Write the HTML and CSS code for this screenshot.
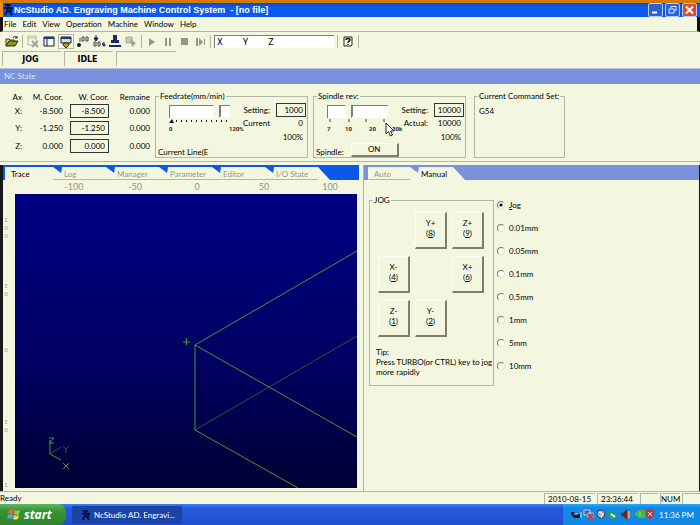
FILE: index.html
```html
<!DOCTYPE html>
<html lang="en">
<head>
<meta charset="utf-8">
<title>NcStudio AD. Engraving Machine Control System</title>
<link rel="stylesheet" href="styles.css">
</head>
<body>
<header class="titlebar">
  <svg class="app-icon" width="11" height="12" viewBox="0 0 11 12"><path d="M2 1h6M5 0v4M1 4h9M5 5L2 11M5 6l4 5M8 5v3" stroke="#061038" stroke-width="2" fill="none"/></svg>
  <h1>NcStudio AD. Engraving Machine Control System &nbsp;- [no file]</h1>
  <div class="window-buttons">
    <button aria-label="Minimize"><svg width="13" height="12" viewBox="0 0 13 12"><path d="M3 8.500h5" stroke="#fff" stroke-width="2"/></svg></button>
    <button aria-label="Restore"><svg width="13" height="12" viewBox="0 0 13 12"><path d="M5 4V2.500h5v4H8.500M3 5h5v4H3z" stroke="#dfe8ff" fill="none"/></svg></button>
    <button class="close" aria-label="Close"><svg width="13" height="12" viewBox="0 0 13 12"><path d="M3 2.500l7 7M10 2.500l-7 7" stroke="#fff" stroke-width="2"/></svg></button>
  </div>
</header>
<nav class="menubar">
  <a href="#">File</a><a href="#">Edit</a><a href="#">View</a><a href="#">Operation</a><a href="#">Machine</a><a href="#">Window</a><a href="#">Help</a>
</nav>
<div class="toolbar">
  <button aria-label="Open"><svg width="14" height="13" viewBox="0 0 14 13"><path d="M1 11V4h3l1 1h4v2" fill="#d8d060" stroke="#38400c"/><path d="M1 11l3-5h9l-3 5z" fill="#8c9418" stroke="#28300a"/><path d="M8 3c1-2 3-2 4 0M12 1v2h-2" stroke="#223" fill="none"/></svg></button>
  <span class="sep"></span>
  <button aria-label="Unload"><svg width="14" height="13" viewBox="0 0 14 13"><path d="M2 1h8v9H2zM2 3h8" fill="none" stroke="#b9bba9"/><path d="M6 6l6 6M12 6l-6 6" stroke="#a3a596" stroke-width="2"/></svg></button>
  <button aria-label="Window"><svg width="14" height="13" viewBox="0 0 14 13"><path d="M2 2h10v9H2z" fill="#fff" stroke="#10183c"/><path d="M2 3h10" stroke="#163a9c" stroke-width="2"/><path d="M5 3v8" stroke="#10183c"/></svg></button>
  <button class="pressed" aria-label="Trace view"><svg width="14" height="13" viewBox="0 0 14 13"><path d="M2 2h10v6H2z" fill="#e8e0a0" stroke="#10183c"/><path d="M2 3h10" stroke="#163a9c" stroke-width="2"/><path d="M5 8h5v2l-3 3-3-3z" fill="#ad9f18" stroke="#282c10"/></svg></button>
  <button aria-label="Set origin"><svg width="14" height="13" viewBox="0 0 14 13"><circle cx="3" cy="10" r="2" fill="#10183c"/><path d="M4 3v4M6 2h2v4H6zM10 2h2v4h-2z" stroke="#444" fill="none"/></svg></button>
  <button aria-label="Return to origin"><svg width="14" height="13" viewBox="0 0 14 13"><path d="M4 0v4M2 3h4L4 6z" stroke="#10183c" fill="#10183c"/><path d="M2 7h2v4H2zM6 7h2v4H6zM10 9l2-2v4z" stroke="#444" fill="none"/><circle cx="12" cy="10" r="1.500" fill="#163a9c"/></svg></button>
  <button aria-label="Tool"><svg width="14" height="13" viewBox="0 0 14 13"><path d="M5 0h4v5h2v3H3V5h2z" fill="#182868"/><path d="M1 10h12v2H1z" fill="#182868"/></svg></button>
  <button aria-label="Breakpoint"><svg width="14" height="13" viewBox="0 0 14 13"><path d="M2 2h6v6H2z" fill="#c9ccb9" stroke="#a6a997"/><path d="M6 4l6 4-4 4z" fill="#9fa28f"/></svg></button>
  <span class="sep"></span>
  <button aria-label="Start"><svg width="14" height="13" viewBox="0 0 14 13"><path d="M4 3v8l6-4z" fill="#92958a"/></svg></button>
  <button aria-label="Pause"><svg width="14" height="13" viewBox="0 0 14 13"><path d="M4 3h2v8H4zM8 3h2v8H8z" fill="#92958a"/></svg></button>
  <button aria-label="Stop"><svg width="14" height="13" viewBox="0 0 14 13"><path d="M4 3h7v7H4z" fill="#92958a"/></svg></button>
  <button aria-label="Resume"><svg width="14" height="13" viewBox="0 0 14 13"><path d="M3 3h2v8H3zM6 3v8l4-4zM11 4h1v6h-1z" fill="#92958a"/></svg></button>
  <span class="sep"></span>
  <input class="mdi" aria-label="Coordinates" value="X         Y         Z">
  <span class="sep"></span>
  <button aria-label="Help"><svg width="14" height="13" viewBox="0 0 14 13"><path d="M3 2h8v8l-1 1H3z" fill="#fbfbe6" stroke="#222" stroke-width="1"/><path d="M5 5c0-2 4-2 4 0 0 1-2 1-2 3M7 9v1" fill="none" stroke="#111" stroke-width="1.500"/></svg></button>
  <span class="sep"></span>
</div>
<div class="mode-row">
  <div class="mode mode-wide">JOG</div><div class="mode">IDLE</div><div class="mode mode-blank"></div>
</div>
<h2 class="section-title">NC State</h2>
<section class="state">
  <table class="coords">
    <thead><tr><th>Ax</th><th>M. Coor.</th><th>W. Coor.</th><th>Remaine</th></tr></thead>
    <tbody>
      <tr><td>X:</td><td>-8.500</td><td><span class="box">-8.500</span></td><td>0.000</td></tr>
      <tr><td>Y:</td><td>-1.250</td><td><span class="box">-1.250</span></td><td>0.000</td></tr>
      <tr><td>Z:</td><td>0.000</td><td><span class="box">0.000</span></td><td>0.000</td></tr>
    </tbody>
  </table>
  <fieldset class="gauge">
    <legend>Feedrate(mm/min)</legend>
    <div class="gauge-grid">
      <div class="scale">
        <input type="range" aria-label="Feedrate override" min="0" max="120" value="100">
        <svg class="ticks" width="76" height="18" viewBox="0 0 76 18"><path d="M0 5l3-4 2 4z" fill="#111"/><path d="M7 3h54" stroke="#222" stroke-width="2" stroke-dasharray="1 4"/><text x="0" y="13">0</text><text x="60" y="13">120%</text></svg>
      </div>
      <label for="feed">Setting:</label><input id="feed" class="num" value="1000">
      <span>Current</span><output>0</output>
      <output class="pct">100%</output>
    </div>
    <div class="gauge-foot">Current Line(E</div>
  </fieldset>
  <fieldset class="gauge">
    <legend>Spindle rev:</legend>
    <div class="gauge-grid">
      <div class="scale">
        <input type="range" aria-label="Spindle speed" min="6" max="24" value="12">
        <svg class="ticks" width="76" height="18" viewBox="0 0 76 18"><path d="M3 1v3M22 1v3M39 1v3M57 1v3" stroke="#333"/><text x="0" y="13">7</text><text x="18" y="13">10</text><text x="42" y="13">20</text><text x="65" y="13">30k</text></svg>
        <svg class="cursor" width="10" height="15" viewBox="0 0 10 15"><path d="M1 1v11l2.500-2.500L5.500 14l2-1-2-4H9z" fill="#fff" stroke="#222"/></svg>
      </div>
      <label for="rev">Setting:</label><input id="rev" class="num" value="10000">
      <span>Actual:</span><output>10000</output>
      <output class="pct">100%</output>
    </div>
    <div class="gauge-foot"><span>Spindle:</span><button class="raised on">ON</button></div>
  </fieldset>
  <fieldset class="commands">
    <legend>Current Command Set:</legend>
    <p>G54</p>
  </fieldset>
</section>
<main class="workspace">
  <section class="trace-pane">
    <div class="tabs">
      <button class="tab active">Trace</button>
      <button class="tab">Log</button>
      <button class="tab">Manager</button>
      <button class="tab">Parameter</button>
      <button class="tab">Editor</button>
      <button class="tab">I/O State</button>
      <span class="tab-end"></span>
    </div>
    <div class="plot">
      <svg class="ruler-x" height="15"><text x="71" y="10">-100</text><text x="132" y="10">-50</text><text x="194" y="10">0</text><text x="261" y="10">50</text><text x="327" y="10">100</text></svg>
      <svg class="ruler-y" width="11"><text x="3" y="28">1</text><text x="3" y="36">0</text><text x="3" y="44">0</text><text x="3" y="94">5</text><text x="3" y="102">0</text><text x="3" y="158">0</text><text x="3" y="230">5</text><text x="3" y="238">0</text><text x="3" y="293">1</text></svg>
      <svg class="view" viewBox="0 0 342 294" preserveAspectRatio="xMinYMin slice">
        <g fill="none" stroke="#3f9c32">
          <path d="M180 236L342 142" stroke="#245c36"/>
          <path d="M180 236V151L342 57M180 151L342 243M180 236L283 294"/>
          <path d="M168 148h7M171.500 144v7"/>
          <path d="M35 246v14l11 6M34 244h5l-5 5h5"/>
          <path d="M35 260l11-7" stroke="#245c36"/>
          <path d="M48 269l6 6M54 269l-6 6"/>
          <path d="M48 252l3 3 3-3M51 255v4" stroke="#245c36"/>
        </g>
      </svg>
    </div>
  </section>
  <section class="manual-pane">
    <div class="tabs pale">
      <button class="tab">Auto</button>
      <button class="tab active">Manual</button>
      <span class="tab-end"></span>
    </div>
    <div class="manual">
      <fieldset class="jog">
        <legend>JOG</legend>
        <div class="pad">
          <span></span><button class="raised">Y+<br>(<u>8</u>)</button><button class="raised">Z+<br>(<u>9</u>)</button>
          <button class="raised">X-<br>(<u>4</u>)</button><span></span><button class="raised">X+<br>(<u>6</u>)</button>
          <button class="raised">Z-<br>(<u>1</u>)</button><button class="raised">Y-<br>(<u>2</u>)</button><span></span>
        </div>
        <p class="tip">Tip:<br>Press TURBO(or CTRL) key to jog<br>more rapidly</p>
      </fieldset>
      <div class="steps">
        <label><input type="radio" name="step" checked><span><u>J</u>og</span></label>
        <label><input type="radio" name="step">0.01mm</label>
        <label><input type="radio" name="step">0.05mm</label>
        <label><input type="radio" name="step">0.1mm</label>
        <label><input type="radio" name="step">0.5mm</label>
        <label><input type="radio" name="step">1mm</label>
        <label><input type="radio" name="step">5mm</label>
        <label><input type="radio" name="step">10mm</label>
      </div>
    </div>
  </section>
</main>
<div class="statusbar">
  <span class="ready">Ready</span>
  <span class="cell date">2010-08-15</span><span class="cell time">23:36:44</span><span class="cell blank"></span><span class="cell num-lock">NUM</span><span class="cell blank"></span>
</div>
<footer class="taskbar">
  <button class="start"><svg width="14" height="14" viewBox="0 0 14 14"><path d="M2 2c2-1 3-1 5 0L6 6C4 5 3 5 1 6z" fill="#f06830"/><path d="M8 2c2 1 3 1 5 0l-1 4c-2 1-3 1-5 0z" fill="#8ad040"/><path d="M1 7c2-1 3-1 5 0l-1 4c-2-1-3-1-5 0z" fill="#5a9cf4"/><path d="M7 7c2 1 3 1 5 0l-1 4c-2 1-3 1-5 0z" fill="#f8d040"/></svg>start</button>
  <button class="task"><svg width="10" height="11" viewBox="0 0 11 12"><path d="M2 1h6M5 0v4M1 4h9M5 5L2 11M5 6l4 5M8 5v3" stroke="#061038" stroke-width="2" fill="none"/></svg>NcStudio AD. Engravi...</button>
  <div class="tray">
    <svg width="85" height="13" viewBox="0 0 85 13">
      <path d="M1 4h3l2 2h4v4H4L1 6z" fill="#182030"/><path d="M4 6h4M11 4v6" stroke="#cde"/>
      <path d="M14 2h6v5h-6zM18 5h5v5h-5z" fill="#485c9c" stroke="#bcd0f0"/><path d="M18 6l5 5M23 6l-5 5" stroke="#d83828" stroke-width="2"/>
      <circle cx="31" cy="6" r="4" fill="#a8b4c4" stroke="#34445c"/><path d="M29 4l4 2-2 4" stroke="#fff" fill="none"/>
      <path d="M39 2l4 4 3-2 1 5-5 2-4-4z" fill="#36a048"/><path d="M41 6l4 3" stroke="#e4f4e0" stroke-width="2"/>
      <path d="M51 5h2l4-4v11l-4-4h-2z" fill="#682820"/><path d="M59 3v7" stroke="#e0a080" stroke-width="2"/>
      <path d="M64 6l5-4h6v8h-6z" fill="#48b848"/><path d="M70 4v4" stroke="#90e080"/>
      <path d="M76 2l4-1 4 1v5l-4 5-4-5z" fill="#d03038"/><path d="M78 4l4 4M82 4l-4 4" stroke="#fff"/>
    </svg>
    <time>11:36 PM</time>
  </div>
</footer>
</body>
</html>
```
FILE: styles.css
```css
* { box-sizing: border-box; }
:root {
  --face: #f4f7e0;
  --line: #b4b7a2;
  --shadow: #7c7e70;
  --periwinkle: #7a92dc;
  --blue: #0a58e8;
}
body {
  margin: 0;
  min-height: 100vh;
  display: flex;
  flex-direction: column;
  background: var(--face);
  color: #000;
  font: 8px/10px Lato, "Liberation Sans", sans-serif;
}
button, input { font: inherit; color: inherit; margin: 0; padding: 0; border: 0; background: none; }
h1, h2, p { margin: 0; font-size: inherit; }
a { color: inherit; text-decoration: none; }
svg { display: block; flex: none; }

.titlebar {
  height: 17px;
  display: flex;
  align-items: center;
  border-top: 3px solid #d47a08;
  border-left: 3px solid #f08c10;
  background: linear-gradient(#0a48c8, #0a5cf4 30%, #0a58f0);
  color: #fff;
}
.titlebar h1 { flex: 1; font: bold 9px/12px "Liberation Sans", sans-serif; white-space: nowrap; }
.window-buttons { display: flex; gap: 2px; padding-right: 3px; }
.window-buttons button { border: 1px solid #b8ccf8; border-radius: 2px; background: #2a62dc; }
.window-buttons .close { background: #dc4c2c; }

.menubar {
  height: 15px;
  display: flex;
  align-items: center;
  gap: 6px;
  padding-left: 1px;
  border-left: 3px solid #101010;
  border-right: 3px solid #101010;
  border-bottom: 1px solid var(--line);
}
.toolbar { height: 18px; display: flex; align-items: center; gap: 2px; padding-left: 5px; }
.toolbar .sep { width: 1px; height: 13px; margin: 0 1px; background: var(--line); }
.toolbar .pressed { border: 1px solid var(--line); background: #fbfcf0; }
.mdi { width: 120px; height: 13px; background: #fff; border-top: 1px solid var(--shadow); border-left: 1px solid var(--shadow); padding-left: 2px; font: 9px/11px Roboto, sans-serif; }

.mode-row { height: 18px; display: flex; gap: 3px; padding: 1px 2px; }
.mode {
  width: 49px;
  height: 15px;
  padding-right: 3px;
  border-top: 1px solid var(--line);
  border-left: 1px solid var(--line);
  font: bold 8px/16px "DejaVu Sans", sans-serif;
  text-align: center;
}
.mode-wide { width: 59px; }
.mode-blank { width: 60px; }
.section-title {
  height: 16px;
  padding-left: 4px;
  border-top: 1px solid #b9c2dc;
  background: var(--periwinkle);
  color: #d8e0f8;
  font-weight: normal;
  line-height: 15px;
}

.state { display: flex; gap: 5px; height: 78px; padding: 8px 8px 0; border-bottom: 1px solid var(--line); }
.coords { flex: none; width: 142px; height: 63px; border-collapse: collapse; table-layout: fixed; text-align: right; }
.coords th { padding: 0; font-weight: normal; height: 10px; white-space: nowrap; }
.coords td { padding: 0; height: 17px; }
.coords th:first-child { width: 14px; }
.coords th:nth-child(2) { width: 41px; }
.coords th:nth-child(3) { width: 46px; }
.coords .box { display: block; height: 14px; margin-left: 7px; padding-right: 3px; border: 1px solid #333; line-height: 12px; }
fieldset { min-width: 0; margin: 0; padding: 0; border: 1px solid var(--line); }
legend { margin-left: 3px; padding: 0 1px; line-height: 8px; white-space: nowrap; }
.gauge { flex: none; width: 153px; height: 66px; }
.gauge + .gauge { margin-right: 3px; }
.gauge-grid {
  display: grid;
  grid-template-columns: 75px 29px 30px;
  grid-template-rows: 13px 14px 13px;
  column-gap: 6px;
  padding: 3px 0 0 4px;
  align-items: center;
  text-align: right;
}
.scale { grid-row: 1 / 4; position: relative; align-self: start; padding: 2px 0 0 9px; }
.scale input {
  display: block;
  width: 61px;
  height: 13px;
  -webkit-appearance: none;
  appearance: none;
  background: #fff;
  border-top: 1px solid var(--shadow);
  border-left: 1px solid var(--shadow);
}
.scale input::-webkit-slider-thumb {
  -webkit-appearance: none;
  width: 8px;
  height: 15px;
  background: linear-gradient(90deg, var(--face) 6px, var(--shadow) 6px);
  clip-path: polygon(0 0, 100% 0, 100% 75%, 50% 100%, 0 75%);
}
.ticks { font: bold 6px Roboto, sans-serif; fill: #222; overflow: visible; }
.cursor { position: absolute; left: 67px; top: 19px; z-index: 1; }
.num { height: 14px; width: 30px; border: 1px solid #333; text-align: right; padding-right: 2px; }
output { padding-right: 3px; }
.pct { grid-column: 3; }
.gauge-foot { display: flex; align-items: end; gap: 7px; height: 14px; padding-left: 2px; }
.raised { border-top: 1px solid #fdfdf4; border-left: 1px solid #fdfdf4; border-right: 2px solid var(--shadow); border-bottom: 2px solid var(--shadow); }
.on { width: 48px; height: 14px; line-height: 11px; }
.commands { width: 91px; height: 66px; }
.commands p { padding: 6px 4px; }

.workspace {
  flex: 1;
  display: grid;
  grid-template-columns: 356fr 336fr;
  column-gap: 4px;
  margin-top: 3px;
  border-left: 3px solid #181818;
  border-right: 1px solid #181818;
}
.trace-pane, .manual-pane { display: flex; flex-direction: column; min-width: 0; }
.manual-pane { border-left: 1px solid var(--line); }
.tabs { --strip: var(--blue); display: flex; height: 15px; border-top: 2px solid var(--strip); border-left: 2px solid var(--strip); }
.tabs.pale { --strip: var(--periwinkle); border-left-width: 4px; }
.tab {
  position: relative;
  flex: none;
  width: 53px;
  padding: 2px 0 0 11px;
  text-align: left;
  color: #94968a;
  border-bottom: 1px solid var(--line);
}
.tab.active { color: #000; border-bottom-color: transparent; }
.tab:first-child { width: 48px; padding-left: 6px; }
.tab::before {
  content: "";
  position: absolute;
  left: 0;
  top: 0;
  width: 9px;
  height: 6px;
  background: var(--strip);
  clip-path: polygon(0 0, 100% 0, 90% 100%);
}
.tab:first-child::before { display: none; }
.pale .tab:first-child { width: 42px; }
.pale .tab.active { width: 43px; }
.tab-end { flex: 1; background: var(--strip); clip-path: polygon(0 0, 100% 0, 100% 100%, 12px 100%); }
.plot {
  flex: 1;
  display: grid;
  grid-template: 14px 1fr / 12px 1fr;
  padding: 0 2px 3px 0;
}
.ruler-x { grid-column: 1 / 3; width: 100%; }
.ruler-x text, .ruler-y text { fill: #94968a; text-anchor: middle; }
.ruler-x text { font-size: 9px; }
.ruler-y text { font-size: 6px; }
.ruler-y { height: 100%; }
.view { width: 100%; height: 100%; min-height: 0; background: linear-gradient(#000084, #000060 60%, #000034); }

.manual { display: flex; gap: 3px; padding: 16px 0 0 5px; }
.jog { width: 125px; height: 190px; }
.pad { display: grid; grid-template-columns: repeat(3, 32px); grid-auto-rows: 37px; gap: 7px 5px; padding: 8px 0 0 8px; }
.pad button { padding-bottom: 4px; }
.tip { padding: 10px 0 0 6px; white-space: nowrap; }
.steps { margin-top: -3px; }
.steps label { display: flex; align-items: center; gap: 4px; height: 23px; }
.steps input {
  width: 8px;
  height: 8px;
  -webkit-appearance: none;
  appearance: none;
  border: 1px solid;
  border-color: var(--shadow) #e4e6d2 #e4e6d2 var(--shadow);
  border-radius: 50%;
  background: #fcfdf2;
}
.steps input:checked { background: radial-gradient(circle, #111 0 1px, #fcfdf2 2px); }

.statusbar { display: flex; align-items: center; gap: 2px; height: 13px; border-top: 1px solid var(--line); }
.ready { flex: 1; }
.cell { height: 11px; padding-left: 3px; border-top: 1px solid var(--line); border-left: 1px solid var(--line); }
.date { width: 51px; }
.time { width: 41px; }
.blank { width: 18px; }
.num-lock { width: 20px; padding-left: 0; }

.taskbar { display: flex; height: 21px; background: linear-gradient(#3c80f4, #2458dc 20%, #2050d0); color: #fff; }
.start {
  display: flex;
  align-items: center;
  gap: 3px;
  width: 66px;
  padding-left: 7px;
  border-radius: 0 8px 8px 0;
  background: linear-gradient(#64b464, #389438 30%, #2c842c);
  font: italic bold 12px "Open Sans", sans-serif;
}
.task { display: flex; align-items: center; gap: 3px; width: 110px; height: 18px; margin: 2px 6px; padding-left: 9px; border-radius: 2px; background: #1c44a8; }
.tray { display: flex; align-items: center; gap: 4px; width: 137px; margin-left: auto; padding-left: 7px; background: linear-gradient(#28a8f8, #1088e4 20%, #1088e4); }
.tray time { white-space: nowrap; }
```
